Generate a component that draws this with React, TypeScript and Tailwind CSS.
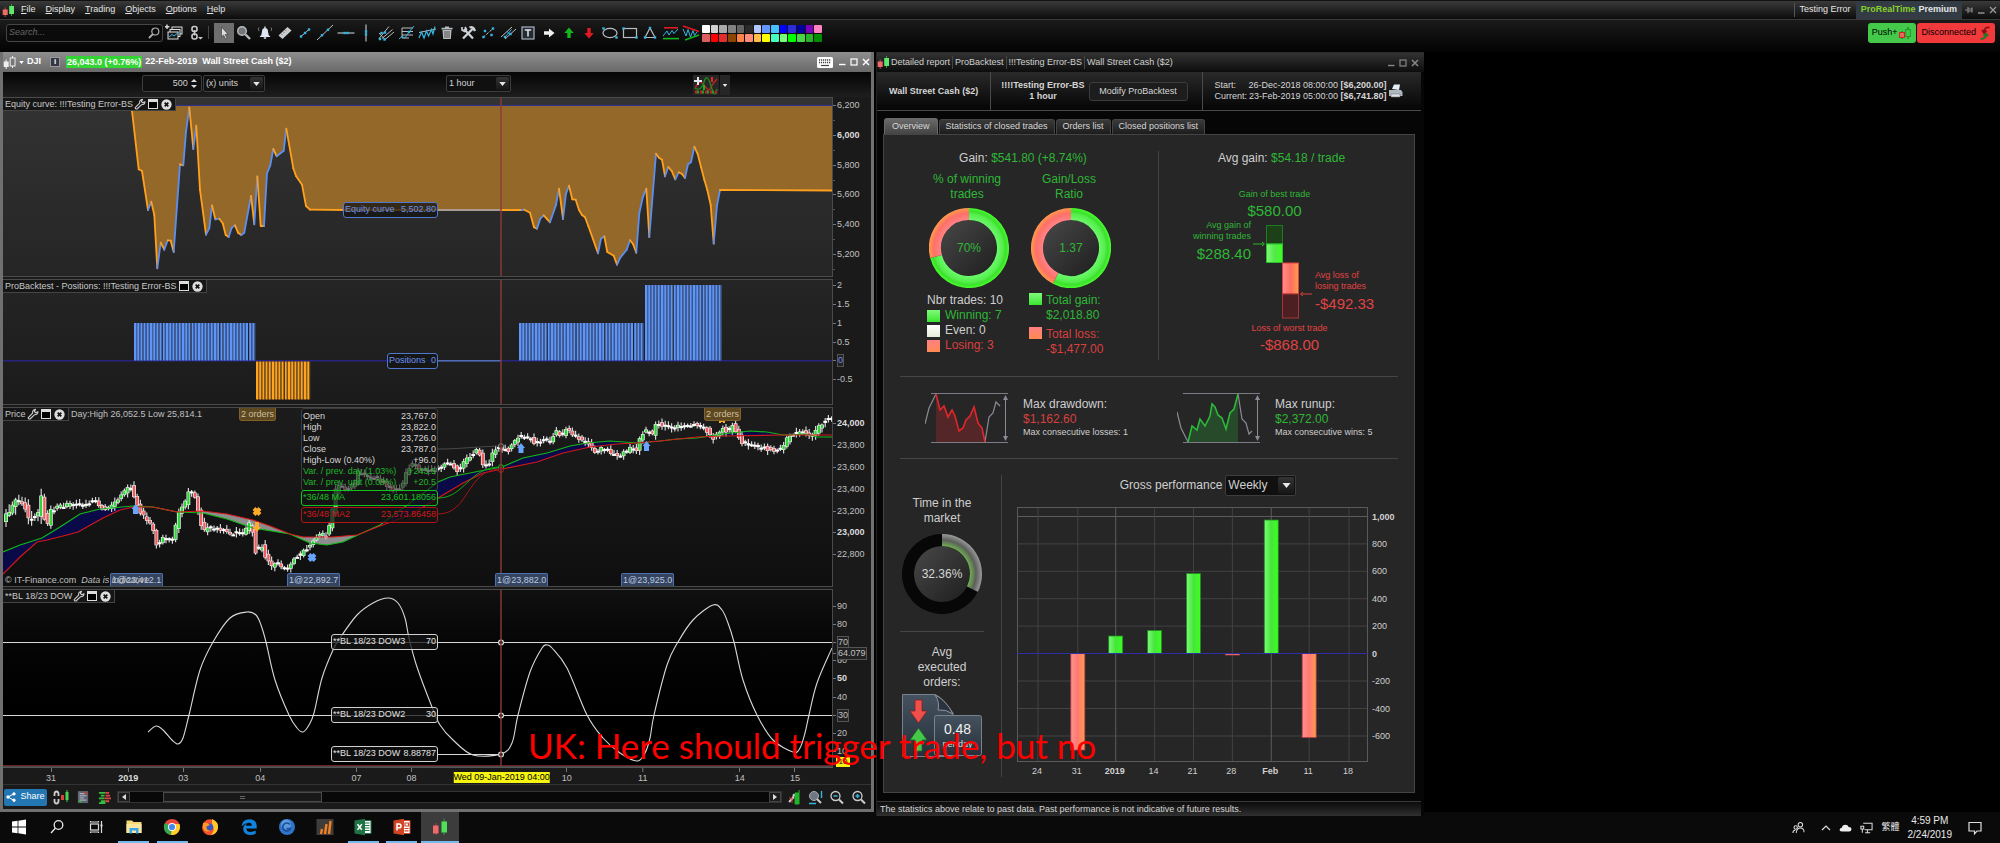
import { useId, useMemo } from 'react'
import type { ReactNode } from 'react'

type Pt = [number, number]
type Tick = { y: number; label?: string; bold?: boolean; box?: boolean; blue?: boolean }

// Shared horizontal domain of the four stacked plots
const X0 = 3
const XW = 829
const CURSOR_X = 501

const pctX = (x: number) => `${((x - X0) / XW) * 100}%`

const EQUITY: Pt[] = [
  [130, 106], [132, 111], [138.7, 169.3], [142, 171], [148, 210], [151.3, 201.7], [154.3, 215], [157.3, 268.3],
  [160.7, 242.7], [164.3, 249.7], [167.7, 240.3], [170.7, 240.7], [173.7, 252], [180, 164.3], [183.3, 165.3],
  [186, 132], [189.3, 107.3], [193.3, 149], [196.3, 125.7], [200, 190], [206, 234.7], [209.3, 228.3], [212, 205.3],
  [215.3, 219.3], [219.3, 218.7], [222.7, 223.3], [225.7, 235], [228.7, 237], [231.7, 227.7], [235, 225.3],
  [238, 232.7], [241.3, 235], [244.3, 232.7], [251, 196], [254.3, 224.3], [257.3, 176.3], [260.7, 226], [264, 226],
  [267, 173.3], [270.3, 165.3], [273.3, 149], [276.7, 156.3], [283.7, 150.7], [286.3, 128.7], [293.3, 168.3],
  [296, 176], [302, 184.7], [306, 206], [310, 209.7], [346, 210], [521.7, 210], [524.3, 209.7], [530, 212.7],
  [534, 227.3], [537, 228.7], [540.3, 218.7], [543.7, 215.3], [546.7, 218.7], [550, 222.3], [556, 205], [559, 188.7],
  [563, 219], [566, 193.7], [569, 185.7], [572.3, 199.3], [575.7, 199.7], [579, 210], [582, 215], [585, 217.3],
  [588.3, 226], [598, 253.3], [601, 238.7], [604.3, 236.3], [607.3, 252], [613.7, 255.7], [617, 264.7],
  [620.3, 257.7], [626.7, 249.7], [630, 240.3], [633, 244], [636.3, 252.7], [639.3, 213.3], [642.7, 197.7],
  [646.3, 188.7], [649.3, 237], [656, 153.7], [659, 157.7], [662, 159.7], [665, 176.3], [668.3, 167], [671.7, 171],
  [675.3, 179.3], [678.7, 172.3], [682, 174], [685, 178], [688, 164.3], [691, 162.3], [694.3, 146.7], [697.7, 154],
  [701, 167], [704.3, 179.7], [707.3, 190], [710.7, 205], [713.7, 243.7], [717, 205.7], [720, 190], [832, 190.5],
]

const PRICE: Pt[] = [
  [4, 524], [6, 518], [12, 510], [16, 500], [22, 502], [26, 503], [29, 520], [33, 519], [39, 517], [43, 494], [47, 524], [50, 525],
  [52, 510], [60, 507], [70, 505], [82, 505], [90, 502], [96, 500], [104, 508], [112, 508], [120, 500], [126, 492],
  [132, 487], [137, 499], [142, 512], [148, 520], [154, 527], [158, 546], [162, 540], [168, 538], [175, 541], [180, 512],
  [186, 505], [190, 490], [196, 495], [200, 512], [205, 532], [212, 527], [222, 529], [230, 534], [238, 532],
  [246, 534], [252, 521], [256, 540], [258, 556], [262, 541], [267, 557], [273, 566], [280, 564], [286, 569],
  [290, 568], [295, 558], [300, 556], [306, 550], [312, 545], [318, 537], [322, 534], [328, 536], [331, 526],
  [335, 505], [338, 485], [342, 487], [350, 489], [356, 484], [360, 472], [372, 478], [380, 478], [390, 488],
  [396, 490], [402, 488], [406, 480], [410, 467], [416, 464], [422, 470], [430, 470], [440, 467], [452, 463],
  [457, 470], [462, 470], [465, 462], [472, 455], [480, 448], [485, 466], [492, 463], [495, 450], [500, 447],
  [510, 451], [518, 437], [530, 437], [537, 443], [545, 438], [552, 441], [558, 430], [563, 438], [567, 427],
  [573, 433], [578, 437], [587, 442], [592, 445], [597, 452], [607, 447], [612, 453], [618, 456], [627, 452],
  [633, 447], [638, 453], [643, 433], [650, 430], [653, 437], [657, 423], [663, 425], [677, 427], [697, 423], [707, 428],
  [715, 440], [723, 428], [730, 432], [734, 424], [739, 434], [745, 444], [763, 447], [775, 451], [785, 447],
  [790, 437], [803, 430], [813, 437], [822, 425], [827, 419], [832, 418],
]

const MA_FAST: Pt[] = [
  [3, 552], [20, 545], [42, 538], [60, 527], [80, 514], [100, 509], [133, 506], [153, 507], [177, 512], [203, 513],
  [227, 519], [253, 528], [290, 534], [310, 543], [327, 545], [343, 542], [360, 534], [380, 525], [410, 503],
  [438, 482], [450, 477], [480, 471], [502, 467], [523, 458], [547, 453], [570, 446], [587, 443], [610, 441],
  [637, 443], [660, 441], [677, 439], [697, 438], [723, 434], [750, 431], [767, 432], [783, 435], [807, 434],
  [817, 437], [832, 437],
]

const MA_SLOW: Pt[] = [
  [3, 574], [20, 557], [37, 542], [47, 540], [67, 535], [78, 532], [103, 518], [120, 510], [133, 507], [153, 507],
  [177, 512], [203, 511], [227, 514], [253, 520], [270, 526], [290, 534], [303, 537], [333, 537], [357, 535],
  [380, 526], [410, 515], [438, 498], [463, 483], [483, 473], [502, 469], [537, 462], [563, 453], [590, 447],
  [617, 444], [637, 443], [660, 441], [697, 437], [723, 436], [783, 435], [832, 435],
]

const OSC: Pt[] = [
  [148, 732], [156, 726], [163, 730], [172, 740], [178, 744], [183, 738], [189, 715], [200, 670], [213, 642],
  [230, 618], [247, 612], [256, 615], [261, 625], [266, 642], [275, 680], [289, 715], [297, 728], [303, 732],
  [309, 725], [314, 713], [322, 678], [333, 650], [340, 638], [357, 615], [373, 603], [388, 598], [398, 603],
  [405, 618], [409, 638], [417, 667], [432, 707], [440, 725], [453, 740], [473, 755], [501, 754], [512, 743],
  [518, 715], [530, 672], [542, 648], [547, 645], [552, 648], [567, 668], [587, 715], [603, 738], [620, 753],
  [637, 761], [645, 753], [650, 738], [654, 715], [667, 665], [678, 642], [693, 620], [713, 605], [722, 610],
  [728, 623], [734, 642], [743, 680], [757, 715], [773, 740], [793, 752], [800, 748], [805, 733], [809, 715],
  [817, 683], [832, 648],
]

function line(pts: Pt[]) {
  return pts.map(([x, y], i) => `${i ? 'L' : 'M'}${x} ${y}`).join(' ')
}

// Catmull-Rom spline through the points
function smooth(pts: Pt[]) {
  let d = `M${pts[0][0]} ${pts[0][1]}`
  for (let i = 0; i < pts.length - 1; i++) {
    const p0 = pts[i - 1] ?? pts[i]
    const p1 = pts[i]
    const p2 = pts[i + 1]
    const p3 = pts[i + 2] ?? p2
    d += ` C${p1[0] + (p2[0] - p0[0]) / 6} ${p1[1] + (p2[1] - p0[1]) / 6} ${p2[0] - (p3[0] - p1[0]) / 6} ${p2[1] - (p3[1] - p1[1]) / 6} ${p2[0]} ${p2[1]}`
  }
  return d
}

function at(pts: Pt[], x: number) {
  for (let i = 1; i < pts.length; i++) {
    if (x <= pts[i][0]) {
      const [xa, ya] = pts[i - 1]
      const [xb, yb] = pts[i]
      return ya + ((yb - ya) * (x - xa)) / (xb - xa)
    }
  }
  return pts[pts.length - 1][1]
}

function band(from: number, to: number) {
  const xs: number[] = []
  for (let x = from; x <= to; x += 3) xs.push(x)
  xs.push(to)
  const top = xs.map(x => [x, at(MA_FAST, x)] as Pt)
  const bottom = [...xs].reverse().map(x => [x, at(MA_SLOW, x)] as Pt)
  return line([...top, ...bottom]) + ' Z'
}

function noise(i: number) {
  const v = Math.sin(i * 127.1) * 43758.5453
  return v - Math.floor(v)
}

// ── chart frame ──────────────────────────────────────────────────────────
function Panel({ y, h, size, shade, ticks, labels, children }: {
  y: number
  h: number
  size: string
  shade: string
  ticks: Tick[]
  labels?: ReactNode
  children: ReactNode
}) {
  return (
    <section className={`flex ${size}`}>
      <div className={`relative min-w-0 flex-1 overflow-hidden border-y border-r border-[#4a4a4a] bg-linear-to-b ${shade}`}>
        <svg viewBox={`${X0} ${y} ${XW} ${h}`} preserveAspectRatio="none" className="absolute inset-0 h-full w-full">
          {children}
          <line x1={CURSOR_X} x2={CURSOR_X} y1={y} y2={y + h} stroke="#8d3a38" strokeWidth="1.4" />
        </svg>
        {labels}
      </div>
      <div className="relative my-px w-[38px] shrink-0 text-[9px] text-[#c0c0c0]">
        {ticks.map(t => (
          <div key={t.y} className="absolute left-0 flex h-[12px] -translate-y-1/2 items-center" style={{ top: `${((t.y - y) / h) * 100}%` }}>
            <span className={`h-px ${t.label ? 'w-[3px] bg-[#777]' : 'w-[2px] bg-[#555]'}`} />
            {t.label && (
              <span className={`ml-px leading-[11px] ${t.bold ? 'font-bold text-[#dcdcdc]' : ''} ${t.box ? 'border border-[#555] bg-[#222]' : ''} ${t.blue ? 'text-[#6f95e8]' : ''}`}>
                {t.label}
              </span>
            )}
          </div>
        ))}
      </div>
    </section>
  )
}

function WrenchIcon() {
  return (
    <svg viewBox="0 0 12 12" className="h-[12px] w-[12px]" fill="none" stroke="#d0d0d0" strokeWidth="1.1" strokeLinejoin="round">
      <path d="M1.2 9.6 L5.6 5.2 Q5.2 2 8.6 1.3 L7.4 3.4 L8.4 4.7 L11 3.8 Q10.8 6.8 7.4 6.8 L3 11 Q1.4 11.4 1.2 9.6 Z" />
    </svg>
  )
}

function PanelTag({ title, wrench }: { title: string; wrench?: boolean }) {
  return (
    <div className="absolute top-0 left-0 flex h-[13px] items-center gap-px border-r border-b border-[#444] bg-[#161616] pr-[3px] pl-[2px] text-[9px] leading-[12px] text-[#c8c8c8]">
      <span className="whitespace-nowrap">{title}</span>
      {wrench && <button aria-label="Settings"><WrenchIcon /></button>}
      <button aria-label="Maximize" className="ml-px h-[10px] w-[10px] border border-[#ddd] border-t-[3px] bg-black" />
      <button aria-label="Close" className="ml-[2px]">
        <svg viewBox="0 0 12 12" className="h-[11px] w-[11px]">
          <circle cx="6" cy="6" r="5.6" fill="#dedede" />
          <path d="M4 4 L8 8 M8 4 L4 8" stroke="#111" strokeWidth="1.8" />
        </svg>
      </button>
    </div>
  )
}

function ValueBox({ x, at: ratio, tone, name, value }: { x: number; at: number; tone: string; name: string; value: string }) {
  return (
    <div
      className={`absolute flex h-[16px] -translate-y-1/2 items-center justify-between rounded-[3px] border bg-[#141414]/75 px-px text-[9px] whitespace-nowrap ${tone}`}
      style={{ left: pctX(x), right: `${100 - ((438 - X0) / XW) * 100}%`, top: `${ratio * 100}%` }}
    >
      <span>{name}</span>
      <span>{value}</span>
    </div>
  )
}

// ── the four plots ───────────────────────────────────────────────────────
function EquityPanel() {
  const ticks: Tick[] = []
  for (let i = 0; i <= 10; i++) {
    const v = 6200 - i * 100
    ticks.push({ y: 105.5 + i * 14.9, label: i % 2 ? undefined : v.toLocaleString('en-US'), bold: v === 6000 })
  }
  ticks.push({ y: 269 })
  return (
    <Panel y={98} h={178} size="h-[180px]" shade="from-[#333] to-[#252525]" ticks={ticks}
      labels={
        <>
          <PanelTag title="Equity curve: !!!Testing Error-BS" wrench />
          <ValueBox x={343} at={112 / 178} tone="border-[#4f78cf] text-[#6a92e8]" name="Equity curve" value="5,502.80" />
        </>
      }>
      <path d={`${line(EQUITY)} L832 105.5 L130 105.5 Z`} fill="#946829" />
      {EQUITY.slice(1).map(([x, y], i) => {
        const [px, py] = EQUITY[i]
        return <line key={i} x1={px} y1={py} x2={x} y2={y} stroke={y < py ? '#5d8ff0' : '#ffa01e'} strokeWidth="1.8" strokeLinecap="round" />
      })}
      <line x1="438" x2="501" y1="210" y2="210" stroke="#8f98b4" strokeWidth="1.4" />
      <line x1="3" x2="832" y1="105.5" y2="105.5" stroke="#33309a" strokeWidth="1.2" />
    </Panel>
  )
}

function Bars({ from, to, y, h, light, dark }: { from: number; to: number; y: number; h: number; light: string; dark: string }) {
  const bars = []
  for (let x = from, i = 0; x < to; x += 3.2, i++) {
    bars.push(
      <g key={i}>
        <rect x={x} y={y} width="2" height={h} fill={light} />
        {i % 9 !== 8 && <rect x={x + 2} y={y} width="1" height={h} fill={dark} />}
      </g>
    )
  }
  return <>{bars}</>
}

function PositionsPanel() {
  return (
    <Panel y={280} h={124} size="h-[126px]" shade="from-[#252525] to-[#1b1b1b]"
      ticks={[
        { y: 285, label: '2' }, { y: 304.5, label: '1.5' }, { y: 323, label: '1' }, { y: 342, label: '0.5' },
        { y: 360.5, label: '0', box: true, blue: true }, { y: 379.5, label: '-0.5' },
      ]}
      labels={
        <>
          <PanelTag title="ProBacktest - Positions: !!!Testing Error-BS" />
          <ValueBox x={387} at={81 / 124} tone="border-[#4f78cf] text-[#6a92e8]" name="Positions" value="0" />
        </>
      }>
      <line x1="3" x2="832" y1="360.8" y2="360.8" stroke="#26247e" strokeWidth="1.6" />
      <line x1="438" x2="501" y1="360.8" y2="360.8" stroke="#4f6fb0" strokeWidth="1.4" />
      <Bars from={134} to={255} y={323} h={37.5} light="#5f95f7" dark="#3f62a6" />
      <Bars from={256} to={310} y={361.5} h={38} light="#ffa41f" dark="#8a5d1e" />
      <Bars from={519} to={643} y={323} h={37.5} light="#5f95f7" dark="#3f62a6" />
      <Bars from={645} to={720} y={285} h={75.5} light="#5f95f7" dark="#3f62a6" />
    </Panel>
  )
}

function Candles() {
  const candles = useMemo(() => {
    const out = []
    for (let x = 6, i = 0; x < 832; x += 3.2, i++) {
      const open = at(PRICE, x - 2) + (noise(i) - 0.5) * 4
      const close = at(PRICE, x + 2) + (noise(i + 900) - 0.5) * 4
      const wild = x < 50 ? 7 : 3.4
      out.push({
        x,
        open,
        close,
        high: Math.min(open, close) - noise(i + 300) * wild - 1,
        low: Math.max(open, close) + noise(i + 600) * wild + 1,
      })
    }
    return out
  }, [])
  return (
    <>
      {candles.map(c => {
        const top = Math.min(c.open, c.close)
        const h = Math.max(2, Math.abs(c.open - c.close))
        return (
          <g key={c.x}>
            <line x1={c.x} x2={c.x} y1={c.high} y2={c.low} stroke="#d4d4d4" strokeWidth="1.2" />
            <rect x={c.x - 1.9} y={top} width="3.8" height={h} fill="#fff" />
            {h > 2.4 && <rect x={c.x - 1.2} y={top + 0.5} width="2.4" height={h - 1} fill={c.close < c.open ? '#2fd63a' : '#f05d60'} />}
          </g>
        )
      })}
    </>
  )
}

function UpArrow({ x, y }: { x: number; y: number }) {
  return <path d={`M${x} ${y - 5} L${x + 4} ${y} H${x + 2.5} V${y + 5} H${x - 2.5} V${y} H${x - 4} Z`} fill="#69a4ff" />
}

function CrossMark({ x, y, fill }: { x: number; y: number; fill: string }) {
  return <path d={`M${x - 3} ${y - 3} L${x + 3} ${y + 3} M${x + 3} ${y - 3} L${x - 3} ${y + 3}`} stroke={fill} strokeWidth="4" />
}

const QUOTE_ROWS = [
  { name: 'Open', value: '23,767.0' },
  { name: 'High', value: '23,822.0' },
  { name: 'Low', value: '23,726.0' },
  { name: 'Close', value: '23,787.0' },
  { name: 'High-Low (0.40%)', value: '+96.0' },
  { name: 'Var. / prev. day (1.03%)', value: '+243.5', up: true },
  { name: 'Var. / prev. unit (0.09%)', value: '+20.5', up: true },
]

function OrderTag({ x, label, orders }: { x: number; label: string; orders?: boolean }) {
  return (
    <span
      className={`absolute border px-px text-[9px] whitespace-nowrap ${orders
        ? 'top-0 rounded-b-[3px] border-t-0 border-[#80612a] bg-[#5d4820] leading-[12px] text-[#cdbf9f]'
        : 'bottom-0 rounded-t-[2px] border-b-0 border-[#4d70b5] bg-[#34445e] leading-[12px] text-[#bcc9e0]'}`}
      style={{ left: pctX(x) }}
    >
      {label}
    </span>
  )
}

function PricePanel() {
  const ticks: Tick[] = []
  for (let v = 24000, i = 0; v >= 22800; v -= 200, i++) {
    ticks.push({ y: 423 + i * 22, label: v.toLocaleString('en-US'), bold: v % 1000 === 0 })
  }
  return (
    <Panel y={408} h={178} size="h-[180px]" shade="from-[#1c1c1c] to-[#0f0f0f]" ticks={ticks}
      labels={
        <>
          <PanelTag title="Price" wrench />
          <span className="absolute top-0 left-[68px] text-[9px] leading-[13px] text-[#c0c0c0]">Day:High 26,052.5 Low 25,814.1</span>
          <OrderTag x={239} label="2 orders" orders />
          <OrderTag x={704} label="2 orders" orders />
          <OrderTag x={110} label="1@23,412.1" />
          <OrderTag x={287} label="1@22,892.7" />
          <OrderTag x={495} label="1@23,882.0" />
          <OrderTag x={621} label="1@23,925.0" />
          <span className="absolute bottom-0 left-[2px] text-[9px] leading-[11px] text-[#c0c0c0]">
            © IT-Finance.com&nbsp; <i>Data is indicative</i>
          </span>
          <dl
            className="absolute top-0 rounded-[3px] border border-[#3c3c3c] bg-[#141414]/60 px-px py-[2px] text-[9px] leading-[11px] text-[#d6d6d6]"
            style={{ left: pctX(301), right: `${100 - ((438 - X0) / XW) * 100}%` }}
          >
            {QUOTE_ROWS.map(r => (
              <div key={r.name} className={`flex justify-between whitespace-nowrap ${r.up ? 'text-[#1fb62a]' : ''}`}>
                <dt>{r.name}</dt>
                <dd>{r.value}</dd>
              </div>
            ))}
          </dl>
          <ValueBox x={301} at={90 / 178} tone="border-[#12c41c] text-[#12c41c]" name="*36/48 MA" value="23,601.18056" />
          <ValueBox x={301} at={107 / 178} tone="border-[#b01215] text-[#d0181b]" name="*36/48 MA2" value="23,573.86458" />
        </>
      }>
      <path d={band(3, 133)} fill="#0b0a48" />
      <path d={band(203, 357)} fill="#8d8d8d" />
      <path d={band(382, 637)} fill="#0b0a48" />
      <path d={band(723, 783)} fill="#0b0a48" />
      <Candles />
      <path d={line(MA_FAST)} fill="none" stroke="#12b81b" strokeWidth="1.2" />
      <path d={line(MA_SLOW)} fill="none" stroke="#d3171b" strokeWidth="1.2" />
      <path d="M438 449 C460 449 470 447 501 446" fill="none" stroke="#4a4a4a" />
      <path d="M438 498 C465 498 468 467 501 467" fill="none" stroke="#12a51a" />
      <path d="M438 514 C470 514 466 469 501 469" fill="none" stroke="#a81316" />
      <circle cx="501" cy="446" r="2.4" fill="#111" stroke="#999" />
      <circle cx="501" cy="467" r="2.4" fill="#111" stroke="#12c41c" />
      <circle cx="501" cy="470" r="2.4" fill="#111" stroke="#d3171b" />
      <UpArrow x={135.5} y={509} />
      <UpArrow x={521} y={448} />
      <UpArrow x={646.5} y={446} />
      <path d="M257 532 L253 527 H255 V522 H259 V527 H261 Z" fill="#ffab2a" />
      <CrossMark x={257} y={511.5} fill="#ffab2a" />
      <CrossMark x={312} y={557.5} fill="#69a4ff" />
      <path d="M719 421 H725 M720 420 V423 M724 420 V423" stroke="#ffab2a" strokeWidth="2" />
    </Panel>
  )
}

function OscPanel() {
  const ticks: Tick[] = []
  for (let v = 90, i = 0; v >= 10; v -= 10, i++) {
    ticks.push({ y: 606 + i * 18.2, label: String(v), bold: v === 50, box: v === 70 || v === 30 })
  }
  ticks.push({ y: 653.5, label: '64.079', box: true })
  const tone = 'border-[#d0d0d0] text-[#e0e0e0]'
  return (
    <Panel y={590} h={176} size="h-[178px]" shade="from-[#101010] to-black" ticks={ticks}
      labels={
        <>
          <PanelTag title="**BL 18/23 DOW" wrench />
          <ValueBox x={331} at={52 / 176} tone={tone} name="**BL 18/23 DOW3" value="70" />
          <ValueBox x={331} at={125 / 176} tone={tone} name="**BL 18/23 DOW2" value="30" />
          <ValueBox x={331} at={164 / 176} tone={tone} name="**BL 18/23 DOW" value="8.88787" />
        </>
      }>
      <line x1="3" x2="832" y1="642.5" y2="642.5" stroke="#d8d8d8" strokeWidth="1.2" />
      <line x1="3" x2="832" y1="715.5" y2="715.5" stroke="#d8d8d8" strokeWidth="1.2" />
      <path d={smooth(OSC)} fill="none" stroke="#d8d8d8" strokeWidth="1.1" />
      <line x1="438" x2="501" y1="754.5" y2="754.5" stroke="#d8d8d8" />
      <line x1="3" x2="832" y1="765.5" y2="765.5" stroke="#6b2020" />
      {[642.5, 715.5, 754.5].map(y => (
        <circle key={y} cx="501" cy={y} r="2.4" fill="#000" stroke="#e0e0e0" strokeWidth="1.2" />
      ))}
    </Panel>
  )
}

const DATES = [
  { x: 51, label: '31' }, { x: 128, label: '2019', bold: true }, { x: 183, label: '03' }, { x: 260, label: '04' },
  { x: 356, label: '07' }, { x: 411, label: '08' }, { x: 566, label: '10' }, { x: 642, label: '11' },
  { x: 739, label: '14' }, { x: 794, label: '15' },
]

function DateAxis() {
  return (
    <div className="flex h-[18px] border-b border-[#333]">
      <div className="relative flex-1 border-t border-[#555] text-[9px] text-[#c0c0c0]">
        {DATES.map(d => (
          <div key={d.x} className="absolute top-0 flex -translate-x-1/2 flex-col items-center" style={{ left: pctX(d.x) }}>
            <span className="h-[4px] w-px bg-[#777]" />
            <span className={`leading-[12px] ${d.bold ? 'font-bold text-[#dcdcdc]' : ''}`}>{d.label}</span>
          </div>
        ))}
        <span className="absolute top-[4px] -translate-x-1/2 bg-[#f5f50f] leading-[11px] whitespace-nowrap text-black" style={{ left: pctX(501) }}>
          Wed 09-Jan-2019 04:00
        </span>
      </div>
      <div className="relative w-[38px] shrink-0">
        <span className="absolute -top-[10px] left-[3px] h-[10px] w-[14px] bg-[#f5f50f] text-center text-[8px] leading-[10px] text-black">10</span>
      </div>
    </div>
  )
}

// ── small pieces ─────────────────────────────────────────────────────────
function CandleLogo({ mono, className = 'h-[13px] w-[13px]' }: { mono?: boolean; className?: string }) {
  return (
    <svg viewBox="0 0 13 13" className={className}>
      <path d="M3.2 3.5 V13" stroke={mono ? '#eee' : '#b34b4b'} />
      <rect x="0.7" y="5.5" width="5" height="5.5" fill={mono ? '#eee' : '#f06a6a'} />
      <path d="M9.5 0 V12" stroke={mono ? '#eee' : '#2f9c3a'} />
      <rect x="7.2" y="2" width="4.8" height="8" fill={mono ? '#777' : '#5fe86a'} stroke={mono ? '#eee' : 'none'} />
    </svg>
  )
}

function WindowButtons({ color }: { color: string }) {
  return (
    <div className="flex items-center gap-[4px]">
      <button aria-label="Minimize">
        <svg viewBox="0 0 8 8" className="h-[8px] w-[8px]" stroke={color} fill="none"><path d="M1 6.5 H7.5" strokeWidth="1.4" /></svg>
      </button>
      <button aria-label="Maximize">
        <svg viewBox="0 0 8 8" className="h-[8px] w-[8px]" stroke={color} fill="none"><rect x="1" y="1" width="6" height="6" strokeWidth="1.2" /></svg>
      </button>
      <button aria-label="Close">
        <svg viewBox="0 0 8 8" className="h-[8px] w-[8px]" stroke={color} fill="none"><path d="M1 1 L7 7 M7 1 L1 7" strokeWidth="1.5" /></svg>
      </button>
    </div>
  )
}

function Picker({ label, value, options, className, large }: { label: string; value: string; options: string[]; className: string; large?: boolean }) {
  return (
    <div className={`relative rounded-[2px] border border-[#3d3d3d] bg-[#101010] ${className}`}>
      <select aria-label={label} defaultValue={value} className="h-full w-full appearance-none bg-transparent pl-[2px] text-[#d0d0d0] outline-none">
        {options.map(o => <option key={o}>{o}</option>)}
      </select>
      <span className={`pointer-events-none absolute inset-y-px right-px flex items-center justify-center rounded-[2px] bg-linear-to-b from-[#343434] to-[#161616] ${large ? 'w-[16px]' : 'w-[13px]'}`}>
        <svg viewBox="0 0 8 5" className={large ? 'h-[5px] w-[9px]' : 'h-[4px] w-[7px]'}><path d="M0 0 H8 L4 5 Z" fill="#e8e8e8" /></svg>
      </span>
    </div>
  )
}

const G = '#b9bcbe'
const B = '#35b6e0'

const dot = (x: number, y: number) => <rect x={x - 1.2} y={y - 1.2} width="2.4" height="2.4" fill={B} stroke="none" />

const TOOLS: { name: string; active?: boolean; art: ReactNode }[] = [
  { name: 'Select', active: true, art: <path d="M7.5 4 L7.5 14 L9.6 12 L11.5 16 L13 15.3 L11.2 11.5 L14 11.3 Z" fill="#ddd" stroke="#333" strokeWidth=".6" /> },
  { name: 'Zoom', art: <><circle cx="8" cy="8" r="4.3" fill="#73777c" stroke={G} strokeWidth="1.4" /><path d="M11.5 11.5 L16 16" stroke={G} strokeWidth="2.4" /></> },
  { name: 'Alert', art: <><path d="M4.5 14 Q7 12 7 8.5 Q7 5 10 5 Q13 5 13 8.5 Q13 12 15.5 14 Z" fill="#dfe6f2" /><path d="M8.8 15 H11.2 M10 3.5 V5" stroke="#dfe6f2" strokeWidth="1.4" /><path d="M4 4.5 Q2.6 6 4 8 M16 4.5 Q17.4 6 16 8" stroke="#777" fill="none" /></> },
  { name: 'Measure', art: <><path d="M3.5 12.5 L12.5 4 L16.5 7.5 L7.5 16 Z" fill="#c9cdd2" /><path d="M6 10.5 L7.5 12 M8 8.5 L9.5 10 M10 6.7 L11.5 8.2" stroke="#666" strokeWidth=".8" /></> },
  { name: 'Segment', art: <><path d="M6 13.5 L14 6.5" stroke={G} />{dot(6, 13.5)}{dot(14, 6.5)}{dot(10, 10)}</> },
  { name: 'Line', art: <><path d="M2 17 L18 2" stroke={G} />{dot(7, 12.2)}{dot(13, 6.8)}</> },
  { name: 'Horizontal line', art: <><path d="M1.5 10 H18.5" stroke={G} strokeWidth="1.2" />{dot(8.5, 10)}{dot(11.5, 10)}</> },
  { name: 'Vertical line', art: <><path d="M10 1.5 V18.5" stroke={G} strokeWidth="1.2" />{dot(10, 8.5)}{dot(10, 11.5)}</> },
  { name: 'Pitchfork', art: <><path d="M3 15.5 L13 3.5 M6 15.5 L16.5 6.5 M9 16.5 L18 9 M3 10 L9 16.5" stroke={G} />{dot(5.5, 10)}{dot(4, 16)}{dot(8.5, 16.5)}{dot(9, 9.5)}</> },
  { name: 'Fibonacci', art: <><path d="M5 5 H16 M5 8.5 H16 M5 12 H16 M5 15 H12 M5 5 V15" stroke={G} /><path d="M2 16 L5 13.5 L8 15 L12 9 L17 3" stroke={B} fill="none" />{dot(12, 9)}</> },
  { name: 'Zigzag', art: <><path d="M2 9.5 L19 6" stroke={G} /><path d="M2 15 L4.5 9 L7 15 L9.5 8 L11.5 13 L14.5 6.5 L16 11 L18 3.5" stroke={B} fill="none" strokeWidth="1.2" /></> },
  { name: 'Delete', art: <><path d="M5.5 7 H14.5 L13.8 16 H6.2 Z M4.5 4.8 H15.5 V6.4 H4.5 Z M8 3.4 H12 V5 H8 Z" fill={G} /><path d="M8 8 V15 M10 8 V15 M12 8 V15" stroke="#444" strokeWidth=".9" /></> },
  { name: 'Tools', art: <><path d="M6 6 L15 15.5 M14.5 6 L5 15.5" stroke="#cdd3d8" strokeWidth="2.3" /><path d="M4 4 L4 7 L6.5 8.5 L8.5 6.5 L7 4" fill="none" stroke="#cdd3d8" strokeWidth="1.6" /><path d="M11.5 4.5 Q15 3 17 8" stroke="#cdd3d8" strokeWidth="2.4" fill="none" /></> },
  { name: 'Regression', art: <><path d="M5 14.5 L15 5.5" stroke={G} strokeDasharray="3 1.4" />{dot(5.5, 14)}{dot(15, 5.5)}{dot(7, 8)}{dot(13.5, 12)}</> },
  { name: 'Channel', art: <><path d="M3 14 L14 4 M7 16 L18 6" stroke={G} /><path d="M7 14 L13.5 6.5 M9 8 L12 12" stroke={B} />{dot(12.5, 11)}{dot(7, 14)}</> },
  { name: 'Text', art: <><rect x="4" y="4" width="12" height="12" fill="#222a34" stroke="#aab4c0" strokeWidth="1.2" /><path d="M6.8 7 H13.2 M10 7 V13.5" stroke="#e8e8e8" strokeWidth="1.5" /></> },
  { name: 'Right arrow', art: <path d="M5 8.3 H10 V5.5 L15.5 10 L10 14.5 V11.7 H5 Z" fill="#f0f0f0" /> },
  { name: 'Up arrow', art: <path d="M8.3 15 V10 H5.3 L10 4.5 L14.7 10 H11.7 V15 Z" fill="#15b51d" /> },
  { name: 'Down arrow', art: <path d="M8.3 5 V10 H5.3 L10 15.5 L14.7 10 H11.7 V5 Z" fill="#e01a20" /> },
  { name: 'Ellipse', art: <><ellipse cx="10" cy="10" rx="7" ry="4.6" fill="none" stroke={G} strokeWidth="1.2" />{dot(3.5, 5.5)}{dot(16.5, 14.5)}</> },
  { name: 'Rectangle', art: <><rect x="3.5" y="5.5" width="13" height="9" fill="none" stroke={G} strokeWidth="1.2" />{dot(3.5, 5.5)}{dot(16.5, 14.5)}</> },
  { name: 'Triangle', art: <><path d="M10 5 L15 14.5 H5 Z" fill="none" stroke={G} strokeWidth="1.2" />{dot(10, 5)}{dot(15, 14.5)}{dot(5, 14.5)}</> },
  { name: 'Horizontal pattern', art: <><path d="M3 4.8 H17" stroke="#e01a20" strokeWidth="1.6" /><path d="M2 15.6 H18" stroke="#15b51d" strokeWidth="1.6" /><path d="M2 13 L6 8 L8 12 L11 7.5 L13 10.5 L17 6" stroke={B} fill="none" /></> },
  { name: 'Triangle pattern', art: <><path d="M2 3 L18 8.5" stroke="#e01a20" strokeWidth="1.6" /><path d="M4 17 L18 12" stroke="#15b51d" strokeWidth="1.6" /><path d="M2 6 L5 13 L7 6.5 L9.5 14 L12 7.5 L13.5 12.5 L16 9" stroke={B} fill="none" /></> },
]

const PALETTE = [
  'bg-[#ffffff]', 'bg-[#d2d2d2]', 'bg-[#aaaaaa]', 'bg-[#828282]', 'bg-[#646464]', 'bg-[#2a2a2a]', 'bg-[#b4c8ff]',
  'bg-[#6496ff]', 'bg-[#46c0ff]', 'bg-[#0000ff]', 'bg-[#2d2dd7]', 'bg-[#0000a0]', 'bg-[#7d00be]', 'bg-[#ff82c3]',
  'bg-[#dc5f5f]', 'bg-[#ff0000]', 'bg-[#e12d2d]', 'bg-[#8c4600]', 'bg-[#ff8246]', 'bg-[#ff8c78]', 'bg-[#ffbe46]',
  'bg-[#ffff00]', 'bg-[#46ffbe]', 'bg-[#78ff78]', 'bg-[#00ff00]', 'bg-[#46d746]', 'bg-[#28b428]', 'bg-[#008c00]',
]

function MenuBar() {
  return (
    <header className="flex h-[19px] items-center border-t border-[#111] bg-linear-to-b from-[#3a3a3a] to-[#0c0c0c] pl-[2px] text-[9px] text-[#e4e4e4]">
      <CandleLogo />
      <nav className="ml-[6px] flex gap-[10px]">
        {['File', 'Display', 'Trading', 'Objects', 'Options', 'Help'].map(m => (
          <button key={m}><u>{m[0]}</u>{m.slice(1)}</button>
        ))}
      </nav>
      <div className="ml-auto flex h-full items-center">
        <span className="border-l border-[#555] px-[5px]">Testing Error</span>
        <span className="flex h-full items-center gap-[3px] bg-[#333b44] px-[5px] text-[9px] font-bold">
          <span className="text-[#86d02c]">ProRealTime</span> Premium
        </span>
        <div className="flex items-center gap-[4px] px-[3px]">
          <button aria-label="Pin">
            <svg viewBox="0 0 8 8" className="h-[8px] w-[8px]" stroke="#888" fill="none"><path d="M0 4 H3 M3 1 V7 M3 3 H7 M3 5 H7 M7 1.5 V6.5" strokeWidth="1.2" /></svg>
          </button>
          <button aria-label="Minimize">
            <svg viewBox="0 0 8 8" className="h-[8px] w-[8px]" stroke="#999" fill="none"><path d="M1 7 H7.5" strokeWidth="1.4" /></svg>
          </button>
          <button aria-label="Close">
            <svg viewBox="0 0 8 8" className="h-[8px] w-[8px]" stroke="#999" fill="none"><path d="M1 1 L7 7 M7 1 L1 7" strokeWidth="1.3" /></svg>
          </button>
        </div>
      </div>
    </header>
  )
}

function Toolbar() {
  return (
    <div className="flex h-[33px] items-start border-t border-[#3a3a3a] bg-linear-to-b from-[#1b1b1b] to-[#040404] pt-[3px] pl-[6px]">
      <label className="mt-px flex h-[18px] w-[157px] items-center rounded-[3px] border border-[#454545] bg-[#0b0b0b] px-[2px]">
        <input type="search" aria-label="Search" placeholder="Search..." className="w-full min-w-0 bg-transparent text-[9px] text-[#ccc] italic outline-none placeholder:text-[#666]" />
        <svg viewBox="0 0 12 12" className="h-[12px] w-[12px] shrink-0" fill="none" stroke="#b0b0b0" strokeWidth="1.2">
          <circle cx="7.3" cy="4.5" r="3.5" /><path d="M4.8 7.2 L1 11" strokeWidth="1.8" />
        </svg>
      </label>
      <button aria-label="Windows" className="ml-px">
        <svg viewBox="0 0 20 20" className="h-[20px] w-[20px]" fill="#1a1a1a" stroke="#ddd">
          <rect x="8" y="4" width="10" height="7" /><rect x="6" y="6.5" width="10" height="7" /><rect x="4" y="9" width="10" height="7" />
          <path d="M5 14 L8 11.5 L10 13 L15 9" stroke={B} fill="none" /><path d="M3 1.5 V6 M1 3.8 H5.4" strokeWidth="1.4" />
        </svg>
      </button>
      <button aria-label="Link" className="ml-px">
        <svg viewBox="0 0 20 20" className="h-[20px] w-[20px]" fill="none" stroke="#ccc" strokeWidth="1.6">
          <rect x="7" y="3.5" width="5" height="5" rx="2" /><rect x="7" y="11" width="5" height="5" rx="2" /><path d="M9.5 7 V12.5" /><path d="M13 14 H18 L15.5 16.5 Z" fill="#ccc" stroke="none" />
        </svg>
      </button>
      <span className="mt-[3px] ml-[3px] h-[13px] w-px bg-[#444]" />
      <div className="ml-[5px] flex w-[487px] justify-between">
        {TOOLS.map(t => (
          <button key={t.name} aria-label={t.name} className={`h-[20px] w-[20px] ${t.active ? 'bg-[#6e6e6e]' : ''}`}>
            <svg viewBox="0 0 20 20" className="h-[20px] w-[20px]">{t.art}</svg>
          </button>
        ))}
      </div>
      <div className="mt-[2px] ml-px grid w-[120px] grid-cols-14 gap-px">
        {PALETTE.map(c => <button key={c} aria-label="Colour" className={`h-[8px] rounded-[1px] ${c}`} />)}
      </div>
      <div className="mr-[5px] ml-auto flex gap-px text-[9px] text-black">
        <button className="flex h-[20px] items-center gap-px rounded-[3px] bg-[#44c94a] px-[4px]">
          Push+
          <svg viewBox="0 0 14 13" className="h-[13px] w-[14px]" fill="none">
            <path d="M4 4 V12 M10 0 V12" stroke="#1a6a20" /><rect x="1.5" y="5.5" width="5" height="5" fill="#e86a5a" stroke="#d8222a" /><rect x="7.8" y="2.5" width="4.6" height="7" fill="#44c94a" stroke="#1d9a2a" />
          </svg>
        </button>
        <button className="flex h-[20px] items-center gap-[3px] rounded-[3px] bg-[#f23a3c] px-[4px]">
          Disconnected
          <svg viewBox="0 0 12 14" className="h-[14px] w-[12px]" fill="none" strokeWidth="1.8">
            <path d="M10.5 1.5 Q5 1 5 6 M3 4 L5 7 L7.5 4.5" stroke="#8a1014" /><path d="M1.5 12.8 Q7 13 7 8.5 M4.6 10 L7 7.5 L9.2 10.3" stroke="#1c7a25" />
          </svg>
        </button>
      </div>
    </div>
  )
}

function ChartWindow() {
  return (
    <section className="flex w-[43.7%] shrink-0 flex-col border-x-[3px] border-b-[3px] border-[#707070] bg-[#1a1a1a]">
      <div className="flex h-[20px] items-center bg-linear-to-b from-[#8e8e8e] to-[#696969] text-[9px] font-bold text-white">
        <CandleLogo mono />
        <svg viewBox="0 0 6 4" className="ml-[3px] h-[3px] w-[5px]"><path d="M0 0 H6 L3 4 Z" fill="#fff" /></svg>
        <span className="ml-[3px]">DJI</span>
        <span className="ml-[9px] flex h-[10px] w-[10px] items-center justify-center border border-[#999] bg-[#333844] text-[8px]">i</span>
        <span className="ml-[6px] bg-[#33d433] px-px leading-[12px]">26,043.0 (+0.76%)</span>
        <span className="ml-[3px]">22-Feb-2019&nbsp; Wall Street Cash ($2)</span>
        <div className="mr-px ml-auto flex items-center gap-[5px]">
          <button aria-label="Keyboard">
            <svg viewBox="0 0 16 11" className="h-[11px] w-[16px]"><rect width="16" height="11" rx="1.5" fill="#fff" /><path d="M2 3 H14 M2 5.5 H14" stroke="#444" strokeDasharray="1.2 .8" strokeWidth="1.4" /><path d="M4 8.5 H12" stroke="#444" strokeWidth="1.2" /></svg>
          </button>
          <WindowButtons color="#fff" />
        </div>
      </div>
      <div className="flex h-[25px] items-start bg-linear-to-b from-[#060606] to-[#1e1e1e] pt-[3px] text-[9px] text-[#d0d0d0]">
        <div className="ml-[16%] flex h-[17px] w-[60px] items-center rounded-[2px] border border-[#3d3d3d] bg-[#101010]">
          <input aria-label="Units" defaultValue="500" className="min-w-0 flex-1 bg-transparent text-right outline-none" />
          <span className="flex w-[13px] flex-col items-center gap-[3px]">
            <svg viewBox="0 0 6 3" className="h-[3px] w-[6px]"><path d="M0 3 H6 L3 0 Z" fill="#ddd" /></svg>
            <svg viewBox="0 0 6 3" className="h-[3px] w-[6px]"><path d="M0 0 H6 L3 3 Z" fill="#ddd" /></svg>
          </span>
        </div>
        <Picker label="Unit type" value="(x) units" options={['(x) units', 'days']} className="ml-px h-[17px] w-[62px]" />
        <Picker label="Timeframe" value="1 hour" options={['1 hour', '4 hours', '1 day']} className="ml-[181px] h-[17px] w-[65px]" />
        <div className="ml-[182px] flex h-[20px] gap-px">
          <button aria-label="Indicators" className="bg-[#262626]">
            <svg viewBox="0 0 26 19" className="h-[19px] w-[26px]" fill="none">
              <path d="M2 13 Q6 2 11 9 T17 13 T24 3" stroke="#c22026" strokeWidth="1.4" /><path d="M2 12 Q8 16 11 6 T18 10 T24 13" stroke="#17881f" strokeWidth="1.4" />
              <path d="M2 16 H24" stroke="#c22026" strokeWidth="3" strokeDasharray="3 2" /><path d="M4 16 H24" stroke="#18a022" strokeWidth="3" strokeDasharray="2 3" />
              <path d="M5 1 V9 M1 5 H9" stroke="#dfe6f5" strokeWidth="2" /><path d="M19 1 V6" stroke="#e02a2a" strokeWidth="2" /><path d="M11 14 V9" stroke="#1fae2a" strokeWidth="2" />
            </svg>
          </button>
          <button aria-label="More indicators" className="flex w-[10px] items-center justify-center bg-[#262626]">
            <svg viewBox="0 0 6 4" className="h-[3px] w-[6px]"><path d="M0 0 H6 L3 4 Z" fill="#eee" /></svg>
          </button>
        </div>
      </div>
      <div className="flex flex-col gap-[2px]">
        <EquityPanel />
        <PositionsPanel />
        <PricePanel />
        <OscPanel />
      </div>
      <DateAxis />
      <div className="flex h-[24px] items-center gap-[6px] pr-[4px] pl-px">
        <button className="flex h-[17px] w-[43px] items-center justify-center gap-[4px] rounded-[2px] bg-[#2277b3] text-[9px] text-white">
          <svg viewBox="0 0 10 10" className="h-[10px] w-[10px]" fill="#fff" stroke="#fff"><path d="M8 1.8 L2 5 L8 8.4" fill="none" /><circle cx="8" cy="1.9" r="1.2" /><circle cx="2" cy="5" r="1.2" /><circle cx="8" cy="8.2" r="1.2" /></svg>
          Share
        </button>
        <svg viewBox="0 0 17 15" className="h-[15px] w-[17px]" fill="none" stroke="#ccc" strokeWidth="1.8">
          <path d="M1.5 6 V4 Q1.5 1.5 3.5 1.5 Q5.5 1.5 5.5 4 V6 M1.5 9 V11 Q1.5 13.5 3.5 13.5 Q5.5 13.5 5.5 11 V9" />
          <rect x="8" y="5" width="3" height="5" fill="#e04040" stroke="none" /><rect x="12.5" y="2" width="3" height="8" fill="#45d450" stroke="none" /><path d="M14 0 V12" stroke="#45d450" strokeWidth="1" />
        </svg>
        <svg viewBox="0 0 14 15" className="ml-px h-[13px] w-[12px]"><rect width="12" height="14" x="1" fill="#5b6570" /><path d="M3 3 H9 M3 5.5 H11 M3 8 H8 M3 10.5 H11" stroke="#ccd" /><path d="M8 1 L12 4" stroke="#e03030" strokeWidth="1.6" /><path d="M2 11 L5 13" stroke="#30c030" strokeWidth="1.6" /></svg>
        <svg viewBox="0 0 14 14" className="ml-[3px] h-[13px] w-[13px]" strokeWidth="2"><path d="M1 2 H8 M3 5 H7 M1 8 H7 M3 11 H8 M1 13 H8" stroke="#2fbf3a" /><path d="M8 2 H12 M8 5 H13 M7 8 H14 M8 11 H12" stroke="#e04545" /></svg>
        <div className="flex h-[12px] flex-1 items-center border border-[#333] bg-[#080808]">
          <button aria-label="Scroll left" className="flex h-full w-[12px] items-center justify-center border border-[#444] bg-[#1c1c1c]">
            <svg viewBox="0 0 4 6" className="h-[6px] w-[4px]"><path d="M4 0 V6 L0 3 Z" fill="#ddd" /></svg>
          </button>
          <div className="ml-[5%] flex h-full w-[24%] items-center justify-center border border-[#4a4a4a] bg-[#191919]">
            <span className="h-[3px] w-[5px] border-y border-[#666]" />
          </div>
          <button aria-label="Scroll right" className="ml-auto flex h-full w-[12px] items-center justify-center border border-[#444] bg-[#1c1c1c]">
            <svg viewBox="0 0 4 6" className="h-[6px] w-[4px]"><path d="M0 0 V6 L4 3 Z" fill="#ddd" /></svg>
          </button>
        </div>
        <svg viewBox="0 0 13 15" className="h-[15px] w-[13px]"><path d="M11 0 V14 H7 V3 H11" fill="#20b52a" stroke="#20b52a" /><path d="M1 12 L5 8 L6 4" stroke="#ccc" strokeWidth="2" fill="none" /><path d="M1 8 H4 V13" stroke="#d33" fill="none" /></svg>
        <svg viewBox="0 0 15 15" className="ml-px h-[15px] w-[15px]"><circle cx="6" cy="6" r="4.5" fill="#6f7880" stroke="#aab" /><path d="M9 9 L13 13" stroke="#ccc" strokeWidth="2" /><path d="M13.5 1 V8 M1 13.5 H8" stroke={B} strokeWidth="1.4" /></svg>
        {[{ name: 'Zoom out', d: 'M4 6 H8' }, { name: 'Zoom in', d: 'M4 6 H8 M6 4 V8' }].map(z => (
          <button key={z.name} aria-label={z.name}>
            <svg viewBox="0 0 15 15" className="h-[15px] w-[16px]" fill="none"><circle cx="6" cy="6" r="4.5" stroke="#ccc" strokeWidth="1.3" /><path d="M9.5 9.5 L13.5 13.5" stroke="#ccc" strokeWidth="2" /><path d={z.d} stroke={B} strokeWidth="1.5" /></svg>
          </button>
        ))}
      </div>
    </section>
  )
}

// ── detailed report ──────────────────────────────────────────────────────
function arc(r: number, from: number, to: number) {
  const p = (t: number) => `${40 + r * Math.sin(t * 2 * Math.PI)} ${40 - r * Math.cos(t * 2 * Math.PI)}`
  return `M${p(from)} A${r} ${r} 0 ${to - from > 0.5 ? 1 : 0} 1 ${p(to)}`
}

function Donut({ share, label }: { share: number; label: string }) {
  const id = useId()
  return (
    <svg viewBox="0 0 80 80" className="h-[80px] w-[80px]" role="img" aria-label={label}>
      <defs>
        <linearGradient id={id} x1="0" y1="0" x2="1" y2="1"><stop offset="0" stopColor="#484848" /><stop offset="1" stopColor="#1e1e1e" /></linearGradient>
        <radialGradient id={`${id}g`} gradientUnits="userSpaceOnUse" cx="40" cy="40" r="40">
          <stop offset=".7" stopColor="#6cf86c" /><stop offset=".85" stopColor="#55ee4c" /><stop offset=".92" stopColor="#3be02c" /><stop offset="1" stopColor="#48ff2c" />
        </radialGradient>
        <radialGradient id={`${id}r`} gradientUnits="userSpaceOnUse" cx="40" cy="40" r="40">
          <stop offset=".7" stopColor="#ff8488" /><stop offset=".87" stopColor="#ff7068" /><stop offset="1" stopColor="#ff9a4c" />
        </radialGradient>
      </defs>
      <circle cx="40" cy="40" r="28" fill={`url(#${id})`} />
      <path d={arc(34, 0, share)} fill="none" stroke={`url(#${id}g)`} strokeWidth="12" />
      <path d={arc(34, share, 0.9999)} fill="none" stroke={`url(#${id}r)`} strokeWidth="12" />
      <text x="40" y="44" textAnchor="middle" fontSize="12" fill="#2fb636">{label}</text>
    </svg>
  )
}

function TimeDonut() {
  return (
    <svg viewBox="0 0 80 80" className="h-[80px] w-[80px]" role="img" aria-label="32.36%">
      <defs>
        <linearGradient id="dial" x1="0" y1="0" x2="1" y2="1"><stop offset="0" stopColor="#484848" /><stop offset="1" stopColor="#1e1e1e" /></linearGradient>
        <radialGradient id="ring" gradientUnits="userSpaceOnUse" cx="40" cy="40" r="40">
          <stop offset=".7" stopColor="#6fae50" /><stop offset=".85" stopColor="#5c5f5a" /><stop offset="1" stopColor="#9a9a9a" />
        </radialGradient>
      </defs>
      <circle cx="40" cy="40" r="28" fill="url(#dial)" />
      <path d={arc(34, 0.3236, 0.9999)} fill="none" stroke="#070707" strokeWidth="12" />
      <path d={arc(34, 0, 0.3236)} fill="none" stroke="url(#ring)" strokeWidth="12" />
      <text x="40" y="44" textAnchor="middle" fontSize="12" fill="#d6d6d6">32.36%</text>
    </svg>
  )
}

function Swatch({ tone }: { tone: string }) {
  return <span className={`h-[12px] w-[13px] shrink-0 bg-linear-to-b ${tone}`} />
}

const GREEN_SWATCH = 'from-[#7dfa78] to-[#35e52a]'
const RED_SWATCH = 'from-[#ff7f80] to-[#ff8a50]'

function TradeRange() {
  return (
    <svg viewBox="1254 224 60 95" className="mt-[4px] h-[95px] w-[60px]">
      <defs>
        <linearGradient id="up"><stop offset="0" stopColor="#7dfa78" /><stop offset=".5" stopColor="#55e84a" /><stop offset="1" stopColor="#3dff20" /></linearGradient>
        <linearGradient id="dn"><stop offset="0" stopColor="#ff8f90" /><stop offset=".5" stopColor="#ff6f60" /><stop offset="1" stopColor="#ff9a50" /></linearGradient>
      </defs>
      <rect x="1267.5" y="225.5" width="16" height="18" fill="#1d4019" stroke="#1f7a24" />
      <rect x="1267.5" y="244" width="16" height="18.5" fill="url(#up)" stroke="#2bc02f" />
      <rect x="1283.5" y="263" width="16" height="31" fill="url(#dn)" stroke="#e0403c" />
      <rect x="1283.5" y="294" width="16" height="24" fill="#4c2022" stroke="#a83236" />
      <path d="M1254 244 H1265 M1263 242 L1265.5 244 L1263 246" stroke="#2bb52f" fill="none" />
      <path d="M1313 294 H1302 M1304 292 L1301.5 294 L1304 296" stroke="#d8403f" fill="none" />
    </svg>
  )
}

function Extremes({ up }: { up?: boolean }) {
  const c = up ? '#2cb83a' : '#e3262b'
  return (
    <svg viewBox="0 0 83 52" className="h-[52px] w-[83px]" fill="none">
      {up ? (
        <>
          <path d="M11 50 L15 34 L20 38 L23 27 L28 34 L33 24 L35 12 L38 15 L41 23 L45 26 L49 37 L53 21 L57 17 L61 2 V50 Z" fill={c} fillOpacity=".25" />
          <path d="M0 20 L4 36 L11 50 M61 2 L65 27 L69 31 L72 42 L75 39" stroke="#8b8b96" strokeWidth="1.2" />
          <path d="M11 50 L15 34 L20 38 L23 27 L28 34 L33 24 L35 12 L38 15 L41 23 L45 26 L49 37 L53 21 L57 17 L61 2" stroke={c} strokeWidth="1.6" />
        </>
      ) : (
        <>
          <path d="M11 2 L15 18 L19 14 L23 25 L27 18 L30 24 L34 39 L38 36 L41 28 L45 24 L49 15 L53 31 L57 36 L60 50 H11 Z" fill={c} fillOpacity=".25" />
          <path d="M0 32 L4 16 L11 2 M60 50 L64 25 L68 21 L71 10 L75 14" stroke="#8b8b96" strokeWidth="1.2" />
          <path d="M11 2 L15 18 L19 14 L23 25 L27 18 L30 24 L34 39 L38 36 L41 28 L45 24 L49 15 L53 31 L57 36 L60 50" stroke={c} strokeWidth="1.6" />
        </>
      )}
      <path d="M6 1.5 H83 M6 50.5 H83" stroke="#7c7c86" strokeWidth="1.2" />
      <path d="M80.5 4 V48" stroke="#8b8b96" />
      <path d="M78 8 L80.5 3 L83 8 Z M78 44 L80.5 49 L83 44 Z" fill="#8b8b96" />
    </svg>
  )
}

const GRID_Y = [516.5, 543.9, 571.3, 598.7, 626.1, 653.5, 681, 708.5, 736]
const WEEKS = [
  { x: 1038, label: '24' },
  { x: 1078, label: '31', to: 750 },
  { x: 1116, label: '2019', bold: true, to: 636 },
  { x: 1155, label: '14', to: 630.5 },
  { x: 1194, label: '21', to: 573.5 },
  { x: 1233, label: '28', to: 655 },
  { x: 1272, label: 'Feb', bold: true, to: 520 },
  { x: 1310, label: '11', to: 737.5 },
  { x: 1350, label: '18' },
]

function GrossChart() {
  return (
    <div className="flex pl-[15px]">
      <div className="min-w-0 flex-1">
        <svg viewBox="1017 507 352 255" preserveAspectRatio="none" className="h-[255px] w-full">
          <defs>
            <linearGradient id="gain"><stop offset="0" stopColor="#7dfa78" /><stop offset=".5" stopColor="#45e53a" /><stop offset="1" stopColor="#3dff20" /></linearGradient>
            <linearGradient id="loss"><stop offset="0" stopColor="#ff9090" /><stop offset=".5" stopColor="#ff7a70" /><stop offset="1" stopColor="#ff9a50" /></linearGradient>
          </defs>
          {GRID_Y.map((y, i) => <line key={y} x1="1017" x2="1369" y1={y} y2={y} stroke={i ? '#424242' : '#5c5c5c'} />)}
          {WEEKS.map(w => <line key={w.x} x1={w.x} x2={w.x} y1="507" y2="762" stroke={w.bold ? '#5c5c5c' : '#424242'} />)}
          <rect x="1017.5" y="507.5" width="351" height="254" fill="none" stroke="#5a5a5a" />
          {WEEKS.map(w => w.to && (
            <rect key={w.x} x={w.x - 7} width="14" y={Math.min(w.to, 653.5)} height={Math.abs(w.to - 653.5)}
              fill={w.to < 653.5 ? 'url(#gain)' : 'url(#loss)'} stroke={w.to < 653.5 ? '#1f8a22' : '#b5404a'} strokeWidth=".8" />
          ))}
          <line x1="1017" x2="1369" y1="653.5" y2="653.5" stroke="#2f2ea8" />
        </svg>
        <div className="relative h-[20px] text-[9px] text-[#d0d0d0]">
          {WEEKS.map(w => (
            <span key={w.x} className={`absolute top-[2px] -translate-x-1/2 ${w.bold ? 'font-bold' : ''}`} style={{ left: `${((w.x - 1018) / 352) * 100}%` }}>
              {w.label}
            </span>
          ))}
        </div>
      </div>
      <div className="relative h-[255px] w-[30px] text-[9px] text-[#d0d0d0]">
        {GRID_Y.map((y, i) => {
          const v = 1000 - i * 200
          return (
            <span key={y} className={`absolute left-[4px] -translate-y-1/2 ${v % 1000 ? '' : 'font-bold'}`} style={{ top: `${((y - 507) / 255) * 100}%` }}>
              {v.toLocaleString('en-US')}
            </span>
          )
        })}
      </div>
    </div>
  )
}

function OrdersPerDay() {
  return (
    <svg viewBox="0 0 80 64" className="h-[64px] w-[80px]">
      <defs>
        <linearGradient id="sheet" x1="0" y1="0" x2="0" y2="1"><stop offset="0" stopColor="#45525f" /><stop offset="1" stopColor="#26303a" /></linearGradient>
      </defs>
      <path d="M.5 .5 H33 Q40 3 51 19 V62.5 H.5 Z" fill="url(#sheet)" stroke="#78828c" />
      <path d="M33 1 Q38 8 36 16 Q44 15 51 20 Q44 6 33 1 Z" fill="#2a333d" stroke="#8b959f" />
      <path d="M13 6 H20 V17 H25 L16.5 29 L8 17 H13 Z" fill="#f0504a" stroke="#8c2020" strokeWidth=".8" />
      <path d="M13 57 H20 V46 H25 L16.5 34 L8 46 H13 Z" fill="#45c84a" stroke="#1a6a20" strokeWidth=".8" />
      <rect x="32.5" y="21.5" width="47" height="40" rx="2" fill="url(#sheet)" stroke="#78828c" />
      <text x="55.5" y="40" textAnchor="middle" fontSize="14" fill="#f0f0f0">0.48</text>
      <text x="55.5" y="53" textAnchor="middle" fontSize="9" fill="#d8d8d8">per day</text>
    </svg>
  )
}

function ReportWindow() {
  return (
    <section className="relative z-10 ml-[2px] flex h-[764px] w-[27.4%] shrink-0 flex-col border-l border-[#222] bg-[#060606]">
      <div className="flex h-[20px] items-center border-t border-[#2a2a2a] bg-linear-to-b from-[#333] to-[#0d0d0d] text-[9px] text-[#d0d0d0]">
        <CandleLogo />
        <div className="ml-px flex divide-x divide-[#444] whitespace-nowrap">
          <span className="pr-[2px]">Detailed report</span>
          <span className="px-[2px]">ProBacktest</span>
          <span className="px-[2px]">!!!Testing Error-BS</span>
          <span className="px-[2px]">Wall Street Cash ($2)</span>
        </div>
        <div className="mr-[5px] ml-auto"><WindowButtons color="#888" /></div>
      </div>
      <div className="mr-[3px] flex h-[39px] items-stretch border-b border-[#4a4a4a] bg-linear-to-b from-[#2a2a2a] to-[#060606] text-[9px] leading-[11px] text-[#d6d6d6]">
        <div className="flex w-[21%] items-center justify-center border-r border-[#4a4a4a] font-bold whitespace-nowrap">Wall Street Cash ($2)</div>
        <div className="flex w-[39%] items-center gap-[4px] border-r border-[#4a4a4a] pl-[10px]">
          <div className="text-center font-bold whitespace-nowrap">!!!!Testing Error-BS<br />1 hour</div>
          <button className="h-[19px] w-[99px] rounded-[3px] border border-[#3c3c3c] bg-[#1d1d1d]">Modify ProBacktest</button>
        </div>
        <div className="flex flex-1 items-center justify-between pr-[18px] pl-[11px] whitespace-nowrap">
          <div>
            <div className="flex justify-between gap-[2px]"><span>Start:</span><span>26-Dec-2018 08:00:00 <b>[$6,200.00]</b></span></div>
            <div className="flex justify-between gap-[2px]"><span>Current:</span><span>23-Feb-2019 05:00:00 <b>[$6,741.80]</b></span></div>
          </div>
          <button aria-label="Print">
            <svg viewBox="0 0 15 14" className="h-[14px] w-[15px]"><path d="M4 5 L6 .5 H12 L11 6 Z" fill="#e8eef5" /><path d="M1 6 H13 L14.5 8 V12 H1 Z" fill="#aeb6be" /><path d="M3 10 H12 V13 H3 Z" fill="#dfe4e8" stroke="#777" strokeWidth=".6" /></svg>
          </button>
        </div>
      </div>
      <div role="tablist" className="mt-[7px] flex h-[16px] items-end gap-px pl-[7px] text-[9px] whitespace-nowrap text-[#d6d6d6]">
        <button role="tab" aria-selected="true" className="h-[16px] rounded-t-[3px] border border-b-0 border-[#6a6a6a] bg-linear-to-b from-[#6a6a6a] to-[#444] px-[7px]">Overview</button>
        {['Statistics of closed trades', 'Orders list', 'Closed positions list'].map(t => (
          <button key={t} role="tab" aria-selected="false" className="h-[15px] rounded-t-[3px] border border-b-0 border-[#444] bg-linear-to-b from-[#3a3a3a] to-[#1d1d1d] px-[6px]">{t}</button>
        ))}
      </div>

      <div className="mr-[9px] ml-[6px] flex h-[659px] flex-col border border-[#444] bg-[#262626] px-[16px] text-[12px] leading-[15px] text-[#cfcfcf]">
        <div className="mt-[16px] grid h-[225px] grid-cols-[259fr_239fr]">
          <div className="h-[209px] border-r border-[#444]">
            <p className="pr-[12px] text-center">Gain: <span className="text-[#2fb636]">$541.80 (+8.74%)</span></p>
            <div className="mt-[6px] flex gap-[14px] pl-[27px]">
              <div className="w-[88px]">
                <p className="w-[80px] text-center text-[#2fb636]">% of winning trades</p>
                <div className="mt-[6px] pl-[2px]"><Donut share={0.71} label="70%" /></div>
                <ul className="mt-[5px] whitespace-nowrap">
                  <li>Nbr trades: 10</li>
                  <li className="flex items-center gap-[5px] text-[#2fb636]"><Swatch tone={GREEN_SWATCH} />Winning: 7</li>
                  <li className="flex items-center gap-[5px]"><Swatch tone="from-white to-[#e6ecd8]" />Even: 0</li>
                  <li className="flex items-center gap-[5px] text-[#d8403f]"><Swatch tone={RED_SWATCH} />Losing: 3</li>
                </ul>
              </div>
              <div className="w-[88px]">
                <p className="w-[80px] text-center text-[#2fb636]">Gain/Loss<br />Ratio</p>
                <div className="mt-[6px] pl-[2px]"><Donut share={0.575} label="1.37" /></div>
                <ul className="mt-[5px] flex flex-col gap-[4px] whitespace-nowrap">
                  <li className="flex gap-[4px] text-[#2fb636]"><Swatch tone={GREEN_SWATCH} /><span>Total gain:<br />$2,018.80</span></li>
                  <li className="flex gap-[4px] text-[#d8403f]"><Swatch tone={RED_SWATCH} /><span>Total loss:<br />-$1,477.00</span></li>
                </ul>
              </div>
            </div>
          </div>
          <div>
            <p className="pl-[6px] text-center">Avg gain: <span className="text-[#2fb636]">$54.18 / trade</span></p>
            <div className="mt-[21px] pr-[8px] text-center text-[#2fb636]">
              <p className="text-[9px] leading-[15px]">Gain of best trade</p>
              <p className="text-[15px] leading-[18px]">$580.00</p>
            </div>
            <div className="grid grid-cols-[92px_60px_1fr] gap-x-[2px]">
              <div className="text-right text-[9px] leading-[11px] text-[#2fb636]">
                Avg gain of<br />winning trades
                <p className="mt-[3px] text-[15px] leading-[18px]">$288.40</p>
              </div>
              <TradeRange />
              <div className="pt-[50px] text-[9px] leading-[11px] text-[#e04342]">
                Avg loss of<br />losing trades
                <p className="mt-[3px] text-[15px] leading-[18px]">-$492.33</p>
              </div>
            </div>
            <div className="mt-[2px] pl-[22px] text-center text-[#e04342]">
              <p className="text-[9px] leading-[15px]">Loss of worst trade</p>
              <p className="text-[15px] leading-[18px]">-$868.00</p>
            </div>
          </div>
        </div>

        <div className="grid h-[83px] grid-cols-[252fr_221fr] items-center border-y border-[#454545] pl-[25px]">
          {[false, true].map(up => (
            <div key={String(up)} className="flex items-center gap-[15px] whitespace-nowrap">
              <Extremes up={up} />
              <div>
                <p>{up ? 'Max runup:' : 'Max drawdown:'}</p>
                <p className={up ? 'text-[#2fb636]' : 'text-[#d8403f]'}>{up ? '$2,372.00' : '$1,162.60'}</p>
                <p className="text-[9px] leading-[11px]">{up ? 'Max consecutive wins: 5' : 'Max consecutive losses: 1'}</p>
              </div>
            </div>
          ))}
        </div>

        <div className="mt-[16px] flex h-[302px]">
          <div className="flex w-[102px] shrink-0 flex-col border-r border-[#444] pr-[17px] text-center">
            <p className="mt-[21px]">Time in the<br />market</p>
            <div className="mt-[8px] pl-[2px]"><TimeDonut /></div>
            <hr className="mt-[17px] border-[#454545]" />
            <p className="mt-[13px] px-[10px]">Avg executed orders:</p>
            <div className="mt-[4px] pl-[2px]"><OrdersPerDay /></div>
          </div>
          <div className="min-w-0 flex-1">
            <div className="mb-[11px] flex h-[21px] items-center justify-center gap-[3px] pl-[16px]">
              <span>Gross performance</span>
              <Picker label="Gross performance" value="Weekly" options={['Daily', 'Weekly', 'Monthly']} className="h-[21px] w-[71px]" large />
            </div>
            <GrossChart />
          </div>
        </div>
      </div>
      <p className="mt-auto mr-[3px] border-t border-[#3a3a3a] bg-linear-to-b from-[#0c0c0c] to-[#303030] pl-[3px] text-[9px] leading-[14px] text-[#d6d6d6]">
        The statistics above relate to past data. Past performance is not indicative of future results.
      </p>
    </section>
  )
}

// ── taskbar ──────────────────────────────────────────────────────────────
const APPS: { name: string; open?: boolean; active?: boolean; art: ReactNode }[] = [
  { name: 'Start', art: <path d="M3 4.6 L8.6 3.8 V9.6 H3 Z M9.4 3.7 L17 2.6 V9.6 H9.4 Z M3 10.4 H8.6 V16.2 L3 15.4 Z M9.4 10.4 H17 V17.4 L9.4 16.3 Z" fill="#fff" /> },
  { name: 'Search', art: <g fill="none" stroke="#e8e8e8" strokeWidth="1.3"><circle cx="11.5" cy="8" r="4.3" /><path d="M8.3 11.2 L4 16" /></g> },
  { name: 'Task view', art: <g fill="none" stroke="#ddd" strokeWidth="1.2"><rect x="4.5" y="7" width="8" height="6" /><path d="M4.5 4 V5 H12.5 V4 M4.5 16 V15 H12.5 V16 M15.5 4 V16" /><path d="M14.5 8.5 H16.5" strokeWidth="2" /></g> },
  { name: 'File Explorer', open: true, art: <><path d="M2.5 3.5 H8 L9.5 5 H17.5 V16 H2.5 Z" fill="#f8d775" /><path d="M2.5 7 H17.5 V16 H2.5 Z" fill="#fbe6a0" /><path d="M5.5 16.5 V11 H14.5 V16.5 H12 V13.5 H8 V16.5 Z" fill="#3aa5e8" /></> },
  { name: 'Chrome', open: true, art: <><circle cx="10" cy="10" r="8" fill="#e8453c" /><path d="M10 10 L3 6 A8 8 0 0 0 9 18 Z" fill="#30a952" /><path d="M10 10 L9 18 A8 8 0 0 0 17.4 7 H10 Z" fill="#fdd023" /><circle cx="10" cy="10" r="4" fill="#fff" /><circle cx="10" cy="10" r="3.1" fill="#4686f0" /></> },
  { name: 'Firefox', art: <><circle cx="10" cy="10.3" r="8" fill="#f5512a" /><path d="M12 2 Q19 5 18 11 Q17 17 11 18 Q16 12 12 8 Z" fill="#ffc72b" /><circle cx="9.6" cy="10" r="3.6" fill="#3355c8" /><path d="M3 6 Q7 5 10 8 L6.5 9.5 Q6 13 10 14 Q5 16 3 11 Z" fill="#ff9a22" /></> },
  { name: 'Edge', art: <path d="M2.5 9.3 Q3.5 2.3 10.5 2.3 Q17.7 2.5 17.7 9.5 V11.5 H7.3 Q7.6 15 11.6 15 Q14.5 15 16.7 13.6 V16.8 Q14.5 18 11 18 Q4.2 17.7 4.2 11.5 Q4.5 8.3 7.8 6.2 Q7 7.7 7 8.7 H12.8 Q12.8 5.7 10 5.7 Q5.8 5.9 2.5 9.3 Z" fill="#1183dc" /> },
  { name: 'Messenger', art: <><circle cx="10" cy="10" r="8" fill="#2f74c8" /><circle cx="9" cy="7.5" r="5" fill="#79b4f0" fillOpacity=".6" /><path d="M13 7.5 A4 4 0 1 0 13.5 11.5 H9.5" fill="none" stroke="#1b4d92" strokeWidth="1.6" /></> },
  { name: 'Analytics', art: <><rect x="1.5" y="2" width="17" height="16" fill="#3e3c3a" /><path d="M6 17 L7 12 M10 17 L11.5 7 M14 17 L15.5 4" stroke="#f08020" strokeWidth="2.4" /></> },
  { name: 'Excel', open: true, art: <><path d="M10 3.5 H18 V16.5 H10 Z" fill="#fff" stroke="#1f7244" /><path d="M12 6 H16.5 M12 8.5 H16.5 M12 11 H16.5 M12 13.5 H16.5" stroke="#1f7244" strokeWidth="1.2" /><path d="M1.5 3.5 L12 1.8 V18.2 L1.5 16.5 Z" fill="#1f7244" /><path d="M4.5 7.3 L8.8 12.9 M8.8 7.3 L4.5 12.9" stroke="#fff" strokeWidth="1.5" /></> },
  { name: 'PowerPoint', open: true, art: <><path d="M10 3.5 H18 V16.5 H10 Z" fill="#fff" stroke="#d04424" /><path d="M13 6 H16.5 V9 H13 Z M12.5 11.5 H16.5 M12.5 13.8 H16.5" stroke="#d04424" strokeWidth="1.2" fill="none" /><path d="M1.5 3.5 L12 1.8 V18.2 L1.5 16.5 Z" fill="#d04424" /><path d="M5 13.5 V7 H7 Q9 7 9 8.9 Q9 10.8 7 10.8 H5" stroke="#fff" strokeWidth="1.5" fill="none" /></> },
  { name: 'ProRealTime', open: true, active: true, art: <><path d="M6 6 V18" stroke="#a84444" /><rect x="3" y="8.5" width="5.5" height="8" fill="#f06a6a" /><path d="M14 1.5 V18" stroke="#2f9c3a" /><rect x="11.5" y="4.5" width="5.5" height="11" fill="#4fe05a" /></> },
]

function Taskbar() {
  return (
    <footer className="flex h-[31px] items-stretch bg-[#0a0a0a] text-[#e8e8e8]">
      <div className="flex w-[459px] justify-between">
        {APPS.map(a => (
          <button key={a.name} aria-label={a.name} className={`flex w-[38px] flex-col items-center pt-[5px] ${a.active ? 'bg-[#3c3c3c]' : ''}`}>
            <svg viewBox="0 0 20 20" className="h-[20px] w-[20px]">{a.art}</svg>
            {a.open && <span className={`mt-auto h-[2px] bg-[#76b9ed] ${a.active ? 'w-full' : 'w-[31px]'}`} />}
          </button>
        ))}
      </div>
      <div className="mr-[18px] ml-auto flex items-center gap-[8px]">
        <svg viewBox="0 0 14 14" className="mr-[8px] h-[13px] w-[13px]" fill="none" stroke="#ddd" strokeWidth="1.1"><circle cx="9" cy="4" r="2.4" /><path d="M4.5 13 Q5 7.5 9 7.5 Q13 7.5 13 12" /><circle cx="4" cy="7" r="1.8" /><path d="M1 13 Q1 10 3.5 10" /></svg>
        <svg viewBox="0 0 10 6" className="h-[6px] w-[10px]" fill="none" stroke="#ddd" strokeWidth="1.2"><path d="M1 5 L5 1 L9 5" /></svg>
        <svg viewBox="0 0 14 9" className="h-[8px] w-[13px]" fill="#eee"><path d="M3 8.5 Q0 8.5 .5 6 Q1 4.3 2.8 4.3 Q3.5 .8 7 .8 Q9.7 .8 10.5 3.5 Q13.7 3.5 13.7 6 Q13.7 8.5 11 8.5 Z" /></svg>
        <svg viewBox="0 0 14 12" className="h-[12px] w-[13px]" fill="none" stroke="#ddd" strokeWidth="1.1"><path d="M3.5 1 H13 V8 H5 M8 8 V11 M5.5 11 H11 M1 4 H4 V7 H1 Z M2.5 7 V11" /></svg>
        <span className="font-['Liberation_Sans','Noto_Sans_CJK_TC',sans-serif] text-[9px]">繁體</span>
        <time className="text-center text-[10px] leading-[14px]">4:59 PM<br />2/24/2019</time>
        <button aria-label="Notifications" className="ml-[8px]">
          <svg viewBox="0 0 14 14" className="h-[14px] w-[14px]" fill="none" stroke="#ddd" strokeWidth="1.2"><path d="M1 1.5 H13 V10 H9 L6.5 12.8 V10 H1 Z" /></svg>
        </button>
      </div>
    </footer>
  )
}

export default function App() {
  return (
    <div className="min-h-screen bg-black font-['Liberation_Sans',Arial,sans-serif]">
      <MenuBar />
      <Toolbar />
      <main className="relative flex h-[760px] items-start">
        <ChartWindow />
        <ReportWindow />
        <p className="pointer-events-none absolute top-[671px] left-[26.4%] z-20 font-['Lato',sans-serif] text-[35px] leading-[44px] whitespace-nowrap text-[#ff0000]">
          UK: Here should trigger trade, but no
        </p>
      </main>
      <Taskbar />
    </div>
  )
}
